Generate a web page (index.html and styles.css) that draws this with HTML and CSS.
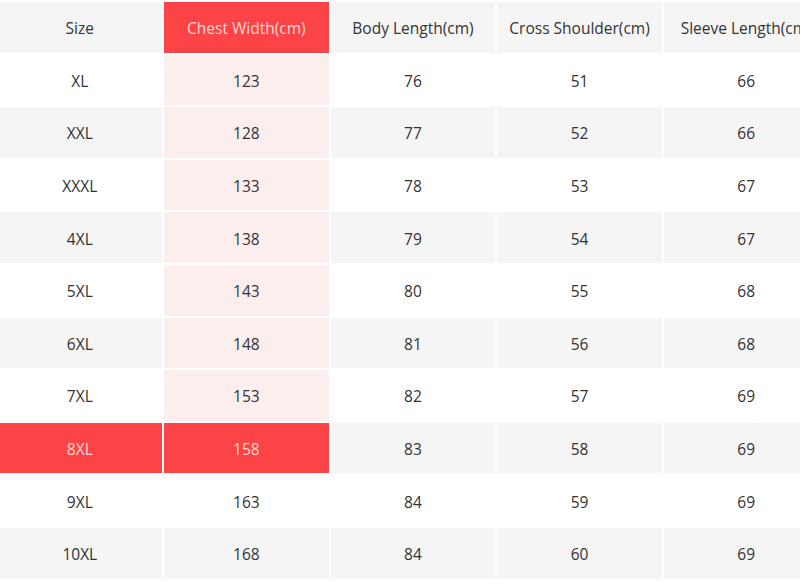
FILE: index.html
```html
<!DOCTYPE html>
<html>
<head>
<meta charset="utf-8">
<link rel="stylesheet" href="styles.css">
</head>
<body>
<table class="size-table">
  <thead>
    <tr class="row-gray">
      <th>Size</th><th class="hl-head">Chest Width(cm)</th><th>Body Length(cm)</th><th>Cross Shoulder(cm)</th><th>Sleeve Length(cm)</th>
    </tr>
  </thead>
  <tbody>
    <tr class="row-white"><td>XL</td><td class="hl">123</td><td>76</td><td>51</td><td>66</td></tr>
    <tr class="row-gray"><td>XXL</td><td class="hl">128</td><td>77</td><td>52</td><td>66</td></tr>
    <tr class="row-white"><td>XXXL</td><td class="hl">133</td><td>78</td><td>53</td><td>67</td></tr>
    <tr class="row-gray"><td>4XL</td><td class="hl">138</td><td>79</td><td>54</td><td>67</td></tr>
    <tr class="row-white"><td>5XL</td><td class="hl">143</td><td>80</td><td>55</td><td>68</td></tr>
    <tr class="row-gray"><td>6XL</td><td class="hl">148</td><td>81</td><td>56</td><td>68</td></tr>
    <tr class="row-white"><td>7XL</td><td class="hl">153</td><td>82</td><td>57</td><td>69</td></tr>
    <tr class="row-gray"><td class="hot">8XL</td><td class="hot">158</td><td>83</td><td>58</td><td>69</td></tr>
    <tr class="row-white"><td>9XL</td><td>163</td><td>84</td><td>59</td><td>69</td></tr>
    <tr class="row-gray"><td>10XL</td><td>168</td><td>84</td><td>60</td><td>69</td></tr>
  </tbody>
</table>
</body>
</html>
```

FILE: styles.css
```css
html, body {
  margin: 0;
  padding: 0;
  background: #ffffff;
  overflow: hidden;
}

.size-table {
  border-collapse: separate;
  border-spacing: 2.5px;
  margin-left: -4.5px;
  width: 835px;
  min-width: 835px;
  table-layout: fixed;
  font-family: "Open Sans", "Liberation Sans", sans-serif;
  font-size: 15.5px;
  color: #333333;
}

.size-table th,
.size-table td {
  width: 164px;
  height: 48.6px;
  padding: 2px 0 0 0;
  text-align: center;
  vertical-align: middle;
  font-weight: normal;
  white-space: nowrap;
  overflow: visible;
}

.row-gray th,
.row-gray td {
  background: #f5f5f5;
}

.row-white td {
  background: #ffffff;
}

.size-table .hl {
  background: #fdeeee;
}

.size-table .hl-head,
.size-table .hot {
  background: #fc4446;
  color: #fbd6d6;
}
```
